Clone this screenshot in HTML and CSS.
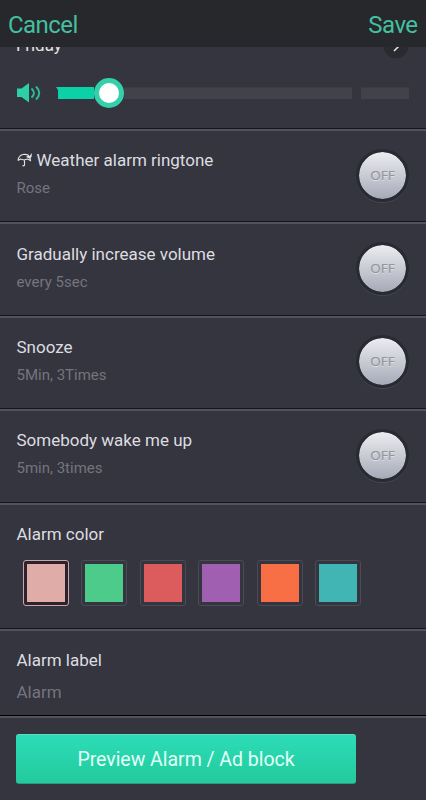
FILE: index.html
```html
<!DOCTYPE html>
<html lang="en">
<head>
<meta charset="utf-8">
<title>Alarm</title>
<link rel="stylesheet" href="styles.css">
</head>
<body>
<header class="bar"><span>Cancel</span><span>Save</span></header>
<main>
  <section class="row volume">
    <div class="day"><span>Friday</span>
      <svg class="go" width="26" height="26" viewBox="0 0 26 26"><circle cx="13" cy="13" r="12.5" fill="#292b31"/><path d="M11 8l5 5-5 5" fill="none" stroke="#e8e8e8" stroke-width="1.5"/></svg>
    </div>
    <div class="slider">
      <svg class="speaker" width="24" height="20" viewBox="0 0 24 20"><path d="M0 5.500h4.500l7.500-5.500v19.500l-7.500-5.500H0z" fill="#2dcfa6"/><path d="M14.500 5.500q5 4.500 0 9M19 3.500q6.500 6.500 0 13" fill="none" stroke="#2dbd9b" stroke-width="1.900"/></svg>
      <div class="track"><div class="fill"></div><div class="knob"></div><div class="rest"></div></div>
      <div class="tail"></div>
    </div>
  </section>
  <section class="row option first">
    <div><h2><svg class="umbrella" width="16" height="16" viewBox="0 0 16 16"><path d="M1 8.500Q1.500 3.500 6 2.500q3-.5 6 1M1 8.500l2.500-1.500 3.500 1 3.500-1 3 1.500Q13.500 6 12 4.500M7.500 7.500v5.500q-.5 1.500-2 .5" fill="none" stroke="#e4e4e5" stroke-width="1.100"/><path d="M9 5l2-1.500 1.500.500L15 1l-.5 4-2 1.500z" fill="#e4e4e5"/></svg>Weather alarm ringtone</h2><p>Rose</p></div>
    <div class="toggle">OFF</div>
  </section>
  <section class="row option">
    <div><h2>Gradually increase volume</h2><p>every 5sec</p></div>
    <div class="toggle">OFF</div>
  </section>
  <section class="row option">
    <div><h2>Snooze</h2><p>5Min, 3Times</p></div>
    <div class="toggle">OFF</div>
  </section>
  <section class="row option">
    <div><h2>Somebody wake me up</h2><p>5min, 3times</p></div>
    <div class="toggle">OFF</div>
  </section>
  <section class="row colors">
    <h2>Alarm color</h2>
    <div class="swatches">
      <div class="swatch selected"><i class="rose"></i></div>
      <div class="swatch"><i class="green"></i></div>
      <div class="swatch"><i class="red"></i></div>
      <div class="swatch"><i class="purple"></i></div>
      <div class="swatch"><i class="orange"></i></div>
      <div class="swatch"><i class="teal"></i></div>
    </div>
  </section>
  <section class="row label"><h2>Alarm label</h2><p>Alarm</p></section>
  <section class="preview"><div class="button">Preview Alarm / Ad block</div></section>
</main>
</body>
</html>
```
FILE: styles.css
```css
* { box-sizing: border-box; margin: 0; padding: 0; }
body {
  width: 426px; height: 800px; overflow: hidden;
  display: flex; flex-direction: column;
  background: #35353f; font-family: Roboto, sans-serif;
}
.bar {
  height: 47px; flex: none; padding: 2px 8.5px 0 8px;
  display: flex; justify-content: space-between; align-items: center;
  background: #26282c; color: #45bfa0; font-size: 24px; letter-spacing: -0.55px;
}
main { overflow: hidden; flex: 1; }
.row { border-bottom: 1px solid #15161d; }
.row + section { border-top: 2px solid #52525c; }
.volume { display: flow-root; height: 82px; }
.day {
  height: 25px; margin-top: -14px; padding: 0 16px;
  display: flex; justify-content: space-between; align-items: center;
  color: #e4e4e5; font-size: 17px;
}
.day span { margin-top: -2px; }
.go { margin-right: 1px; }
.slider { height: 70px; display: flex; align-items: center; padding-left: 17px; }
.speaker { margin-right: 15px; }
.track { width: 296px; height: 12px; display: flex; align-items: center; }
.fill { width: 38px; height: 12px; background: #0bd1a6; clip-path: polygon(0 0, 100% 0, 100% 100%, 2px 100%, 2px 3px); }
.knob { width: 30px; height: 30px; border-radius: 50%; border: 5px solid #35d0aa; background: #fff; flex: none; }
.rest { flex: 1; height: 12px; background: #42424b; border-top: 1px solid #3c3c45; }
.tail { width: 48px; height: 12px; margin-left: 9px; background: #42424b; border-top: 1px solid #3c3c45; }
h2 { font-size: 17px; line-height: 20px; font-weight: 400; color: #dddde0; white-space: nowrap; }
.umbrella { vertical-align: -2px; margin-right: 4px; }
p { font-size: 15px; line-height: 18px; color: #74747d; }
.option {
  height: 93.4px; padding: 0 17px 2px 16.5px;
  display: flex; justify-content: space-between; align-items: center;
}
.option p { margin-top: 9px; }
.option > div:first-child { margin-top: -3px; }
.toggle {
  width: 53px; height: 53px; border-radius: 50%; border: 3px solid #292b33;
  display: flex; align-items: center; justify-content: center;
  background: linear-gradient(#ecedf0, #a6a9b8);
  background-clip: padding-box;
  box-shadow: 0 1px 0 #464750;
  padding-bottom: 1px;
  font: 13.5px "Open Sans", sans-serif; color: #94969c; -webkit-text-stroke: 0.2px #94969c; text-shadow: 0 1px 0 #dfe0e4;
}
.colors { height: 126px; padding: 19px 16px 0 16.5px; }
.swatches { display: flex; gap: 12.400px; margin: 16px 0 0 6.500px; }
.swatch { width: 46px; height: 46px; padding: 3px; border: 1px solid #4b4b55; border-radius: 3px; }
.swatch i { display: block; width: 38px; height: 38px; }
.selected { border-color: #c9a5ab; background: #2b222b; }
.rose { background: #dfaca8; }
.green { background: #4dcb8b; }
.red { background: #dc5b5d; }
.purple { background: #a15fb1; }
.orange { background: #f86f45; }
.teal { background: #41b4b4; }
.label { height: 87px; padding: 19px 16px 0 16.5px; border-bottom-color: #000; }
.label p { font-size: 17px; line-height: 20px; margin-top: 12px; }
.preview { padding: 16px; }
.button {
  width: 340px; height: 50px; border-radius: 3px; padding-top: 2px;
  display: flex; align-items: center; justify-content: center;
  background: linear-gradient(#2cdcb7, #23ca9d);
  border-top: 1px solid #5bdcc0; border-bottom: 1px solid #2a9b80;
  color: #e2fff7; font-size: 19.5px; letter-spacing: -0.03px;
}
```
